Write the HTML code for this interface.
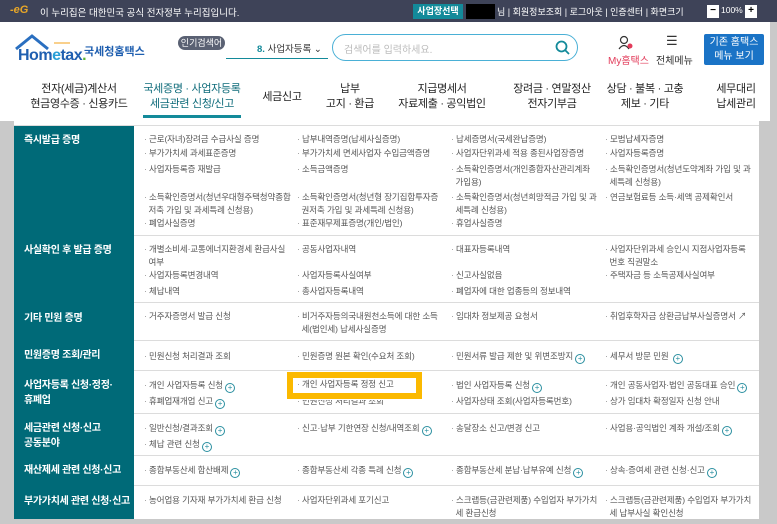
<!DOCTYPE html>
<html><head><meta charset="utf-8"><style>
*{margin:0;padding:0;box-sizing:border-box}
body{width:777px;height:524px;overflow:hidden;background:#c9c9c9;font-family:"Liberation Sans","Noto Sans CJK KR",sans-serif;position:relative}
.a{position:absolute;white-space:nowrap}
.top{position:absolute;left:0;top:0;width:777px;height:22px;background:#3e4358;color:#fff;font-size:10px}
.hdr{position:absolute;left:0;top:22px;width:770px;height:99px;background:#fff}
.main{position:absolute;left:14px;top:121px;width:745px;height:398px;background:#fff}
.side{position:absolute;left:14px;width:120px;background:#006a78;color:#fff;font-size:10px;letter-spacing:-0.3px;font-weight:bold;padding-left:10px;line-height:15px;white-space:nowrap}
.hl{position:absolute;left:134px;width:625px;height:1px;background:#dcdcdc}
.it{position:absolute;font-size:8.5px;color:#555;line-height:13px;white-space:nowrap;letter-spacing:-0.1px}
.it:before{content:"· ";color:#888}
.p{display:inline-block;width:10px;height:10px;border:1px solid #2a8fa0;border-radius:50%;font-size:8px;line-height:8px;text-align:center;color:#2a8fa0;vertical-align:-2px;margin-left:2px}
.nav{position:absolute;top:60px;font-size:11px;color:#222;text-align:center;line-height:15px;transform:translateX(-50%);white-space:nowrap;letter-spacing:-0.3px}
</style></head><body>
<div class="top">
<div class="a" style="left:10px;top:4px;color:#e7a628;font-weight:bold;font-style:italic;font-size:11px">-eG</div>
<div class="a" style="left:40px;top:5px;font-size:9.5px">이 누리집은 대한민국 공식 전자정부 누리집입니다.</div>
<div class="a" style="left:413px;top:4px;width:50px;height:15px;background:#138a9a;font-size:9px;text-align:center;line-height:15px;font-weight:bold">사업장선택</div>
<div class="a" style="left:466px;top:4px;width:29px;height:15px;background:#000"></div>
<div class="a" style="left:497px;top:5px;font-size:9px">님 | 회원정보조회 | 로그아웃 | 인증센터 | 화면크기</div>
<div class="a" style="left:707px;top:5px;width:12px;height:13px;background:#fff;color:#000;text-align:center;line-height:12px;font-weight:bold">−</div>
<div class="a" style="left:721px;top:5px;font-size:8.5px">100%</div>
<div class="a" style="left:745px;top:5px;width:12px;height:13px;background:#fff;color:#000;text-align:center;line-height:12px;font-weight:bold">+</div>
</div>
<div class="hdr">
<svg class="a" style="left:14px;top:11px" width="60" height="22"><path d="M2 16 L18 3 L34 16" fill="none" stroke="#2a6fc0" stroke-width="3"/><path d="M40 10 h16" stroke="#f3a11a" stroke-width="1"/></svg>
<div class="a" style="left:18px;top:25px;font-size:16px;font-weight:bold;color:#1f5fb0;letter-spacing:-0.5px">Hom<span style="color:#2a9fd8">e</span>tax<span style="color:#5cb531">.</span></div>
<div class="a" style="left:84px;top:21px;font-size:11px;color:#1f5fb0;font-weight:bold">국세청홈택스</div>
<div class="a" style="left:178px;top:14px;width:47px;height:14px;background:#5a6173;border-radius:7px;color:#fff;font-size:9px;text-align:center;line-height:14px">인기검색어</div>
<div class="a" style="left:257px;top:19px;font-size:9.5px;color:#333"><b style="color:#138a9a">8.</b> 사업자등록 ⌄</div>
<div class="a" style="left:226px;top:36px;width:102px;height:1px;background:#138a9a"></div>
<div class="a" style="left:332px;top:12px;width:246px;height:27px;border:1.5px solid #4ab0d6;border-radius:14px"></div>
<div class="a" style="left:344px;top:19px;font-size:10px;color:#bbb">검색어를 입력하세요.</div>
<svg class="a" style="left:555px;top:18px" width="15" height="15"><circle cx="6.5" cy="6.5" r="5" fill="none" stroke="#138a9a" stroke-width="1.8"/><path d="M10 10 L14 14" stroke="#138a9a" stroke-width="1.8"/></svg>
<svg class="a" style="left:618px;top:13px" width="16" height="16"><circle cx="6" cy="5" r="3.5" fill="none" stroke="#333" stroke-width="1.2"/><path d="M1 14 Q6 7 11 14" fill="none" stroke="#333" stroke-width="1.2"/><circle cx="12" cy="11" r="2.5" fill="#e23b5a"/></svg>
<div class="a" style="left:608px;top:30px;font-size:10px;color:#e23b5a">My홈택스</div>
<div class="a" style="left:666px;top:11px;font-size:13px;color:#333">☰</div>
<div class="a" style="left:656px;top:30px;font-size:10px;color:#333">전체메뉴</div>
<div class="a" style="left:704px;top:12px;width:60px;height:31px;background:#1a73c6;border-radius:2px;color:#fff;font-size:10px;text-align:center;line-height:14px;padding-top:2px">기존 홈택스<br>메뉴 보기</div>
<div class="nav" style="left:79px">전자(세금)계산서<br>현금영수증 · 신용카드</div>
<div class="nav" style="left:192px;color:#0e6b7a">국세증명 · 사업자등록<br>세금관련 신청/신고</div>
<div class="a" style="left:143px;top:93px;width:98px;height:3px;background:#138a9a"></div>
<div class="nav" style="left:282px;top:68px">세금신고</div>
<div class="nav" style="left:350px">납부<br>고지 · 환급</div>
<div class="nav" style="left:442px">지급명세서<br>자료제출 · 공익법인</div>
<div class="nav" style="left:552px">장려금 · 연말정산<br>전자기부금</div>
<div class="nav" style="left:645px">상담 · 불복 · 고충<br>제보 · 기타</div>
<div class="nav" style="left:736px">세무대리<br>납세관리</div>
</div>
<div class="main"></div>
<div class="a" style="left:14px;top:125px;width:745px;height:1px;background:#dcdcdc"></div>
<div class="side" style="top:126px;height:110px;padding-top:7px">즉시발급 증명</div>
<div class="side" style="top:236px;height:67px;padding-top:7px">사실확인 후 발급 증명</div>
<div class="side" style="top:303px;height:38px;padding-top:8px">기타 민원 증명</div>
<div class="side" style="top:341px;height:30px;padding-top:7px">민원증명 조회/관리</div>
<div class="side" style="top:371px;height:43px;padding-top:7px">사업자등록 신청·정정·<br>휴폐업</div>
<div class="side" style="top:414px;height:42px;padding-top:7px">세금관련 신청·신고<br>공동분야</div>
<div class="side" style="top:456px;height:30px;padding-top:7px">재산제세 관련 신청·신고</div>
<div class="side" style="top:486px;height:33px;padding-top:8px">부가가치세 관련 신청·신고</div>
<div class="hl" style="top:235px"></div><div class="hl" style="top:302px"></div><div class="hl" style="top:340px"></div><div class="hl" style="top:370px"></div><div class="hl" style="top:413px"></div><div class="hl" style="top:455px"></div><div class="hl" style="top:485px"></div>

<div class="it" style="left:144px;top:133px">근로(자녀)장려금 수급사실 증명</div>
<div class="it" style="left:144px;top:147px">부가가치세 과세표준증명</div>
<div class="it" style="left:144px;top:163px">사업자등록증 재발급</div>
<div class="it" style="left:144px;top:191px">소득확인증명서(청년우대형주택청약종합<br>&nbsp;&nbsp;저축 가입 및 과세특례 신청용)</div>
<div class="it" style="left:144px;top:217px">폐업사실증명</div>
<div class="it" style="left:297px;top:133px">납부내역증명(납세사실증명)</div>
<div class="it" style="left:297px;top:147px">부가가치세 면세사업자 수입금액증명</div>
<div class="it" style="left:297px;top:163px">소득금액증명</div>
<div class="it" style="left:297px;top:191px">소득확인증명서(청년형 장기집합투자증<br>&nbsp;&nbsp;권저축 가입 및 과세특례 신청용)</div>
<div class="it" style="left:297px;top:217px">표준재무제표증명(개인/법인)</div>
<div class="it" style="left:451px;top:133px">납세증명서(국세완납증명)</div>
<div class="it" style="left:451px;top:147px">사업자단위과세 적용 종된사업장증명</div>
<div class="it" style="left:451px;top:163px">소득확인증명서(개인종합자산관리계좌<br>&nbsp;&nbsp;가입용)</div>
<div class="it" style="left:451px;top:191px">소득확인증명서(청년희망적금 가입 및 과<br>&nbsp;&nbsp;세특례 신청용)</div>
<div class="it" style="left:451px;top:217px">휴업사실증명</div>
<div class="it" style="left:605px;top:133px">모범납세자증명</div>
<div class="it" style="left:605px;top:147px">사업자등록증명</div>
<div class="it" style="left:605px;top:163px">소득확인증명서(청년도약계좌 가입 및 과<br>&nbsp;&nbsp;세특례 신청용)</div>
<div class="it" style="left:605px;top:191px">연금보험료등 소득·세액 공제확인서</div>

<div class="it" style="left:144px;top:243px">개별소비세·교통에너지환경세 환급사실<br>&nbsp;&nbsp;여부</div>
<div class="it" style="left:144px;top:269px">사업자등록변경내역</div>
<div class="it" style="left:144px;top:285px">체납내역</div>
<div class="it" style="left:297px;top:243px">공동사업자내역</div>
<div class="it" style="left:297px;top:269px">사업자등록사실여부</div>
<div class="it" style="left:297px;top:285px">총사업자등록내역</div>
<div class="it" style="left:451px;top:243px">대표자등록내역</div>
<div class="it" style="left:451px;top:269px">신고사실없음</div>
<div class="it" style="left:451px;top:285px">폐업자에 대한 업종등의 정보내역</div>
<div class="it" style="left:605px;top:243px">사업자단위과세 승인시 지점사업자등록<br>&nbsp;&nbsp;번호 직권말소</div>
<div class="it" style="left:605px;top:269px">주택자금 등 소득공제사실여부</div>

<div class="it" style="left:144px;top:310px">거주자증명서 발급 신청</div>
<div class="it" style="left:297px;top:310px">비거주자등의국내원천소득에 대한 소득<br>&nbsp;&nbsp;세(법인세) 납세사실증명</div>
<div class="it" style="left:451px;top:310px">임대차 정보제공 요청서</div>
<div class="it" style="left:605px;top:310px">취업후학자금 상환금납부사실증명서 ↗</div>

<div class="it" style="left:144px;top:350px">민원신청 처리결과 조회</div>
<div class="it" style="left:297px;top:350px">민원증명 원본 확인(수요처 조회)</div>
<div class="it" style="left:451px;top:350px">민원서류 발급 제한 및 위변조방지<span class="p">+</span></div>
<div class="it" style="left:605px;top:350px">세무서 방문 민원 <span class="p">+</span></div>

<div class="a" style="left:287px;top:372px;width:135px;height:27px;border:6px solid #fbb900;background:#fff"></div>
<div class="it" style="left:144px;top:379px">개인 사업자등록 신청<span class="p">+</span></div>
<div class="it" style="left:144px;top:395px">휴폐업재개업 신고<span class="p">+</span></div>
<div class="it" style="left:297px;top:378px">개인 사업자등록 정정 신고</div>
<div class="it" style="left:297px;top:395px;clip-path:inset(5px 0 0 0)">민원신청 처리결과 조회</div>
<div class="it" style="left:451px;top:379px">법인 사업자등록 신청<span class="p">+</span></div>
<div class="it" style="left:451px;top:395px">사업자상태 조회(사업자등록번호)</div>
<div class="it" style="left:605px;top:379px">개인 공동사업자·법인 공동대표 승인<span class="p">+</span></div>
<div class="it" style="left:605px;top:395px">상가 임대차 확정일자 신청 안내</div>

<div class="it" style="left:144px;top:422px">일반신청/결과조회<span class="p">+</span></div>
<div class="it" style="left:144px;top:438px">체납 관련 신청<span class="p">+</span></div>
<div class="it" style="left:297px;top:422px">신고·납부 기한연장 신청/내역조회<span class="p">+</span></div>
<div class="it" style="left:451px;top:422px">송달장소 신고/변경 신고</div>
<div class="it" style="left:605px;top:422px">사업용·공익법인 계좌 개설/조회<span class="p">+</span></div>

<div class="it" style="left:144px;top:464px">종합부동산세 합산배제<span class="p">+</span></div>
<div class="it" style="left:297px;top:464px">종합부동산세 각종 특례 신청<span class="p">+</span></div>
<div class="it" style="left:451px;top:464px">종합부동산세 분납·납부유예 신청<span class="p">+</span></div>
<div class="it" style="left:605px;top:464px">상속·증여세 관련 신청·신고<span class="p">+</span></div>

<div class="it" style="left:144px;top:494px">농어업용 기자재 부가가치세 환급 신청</div>
<div class="it" style="left:297px;top:494px">사업자단위과세 포기신고</div>
<div class="it" style="left:451px;top:494px">스크랩등(금관련제품) 수입업자 부가가치<br>&nbsp;&nbsp;세 환급신청</div>
<div class="it" style="left:605px;top:494px">스크랩등(금관련제품) 수입업자 부가가치<br>&nbsp;&nbsp;세 납부사실 확인신청</div>
</body></html>
